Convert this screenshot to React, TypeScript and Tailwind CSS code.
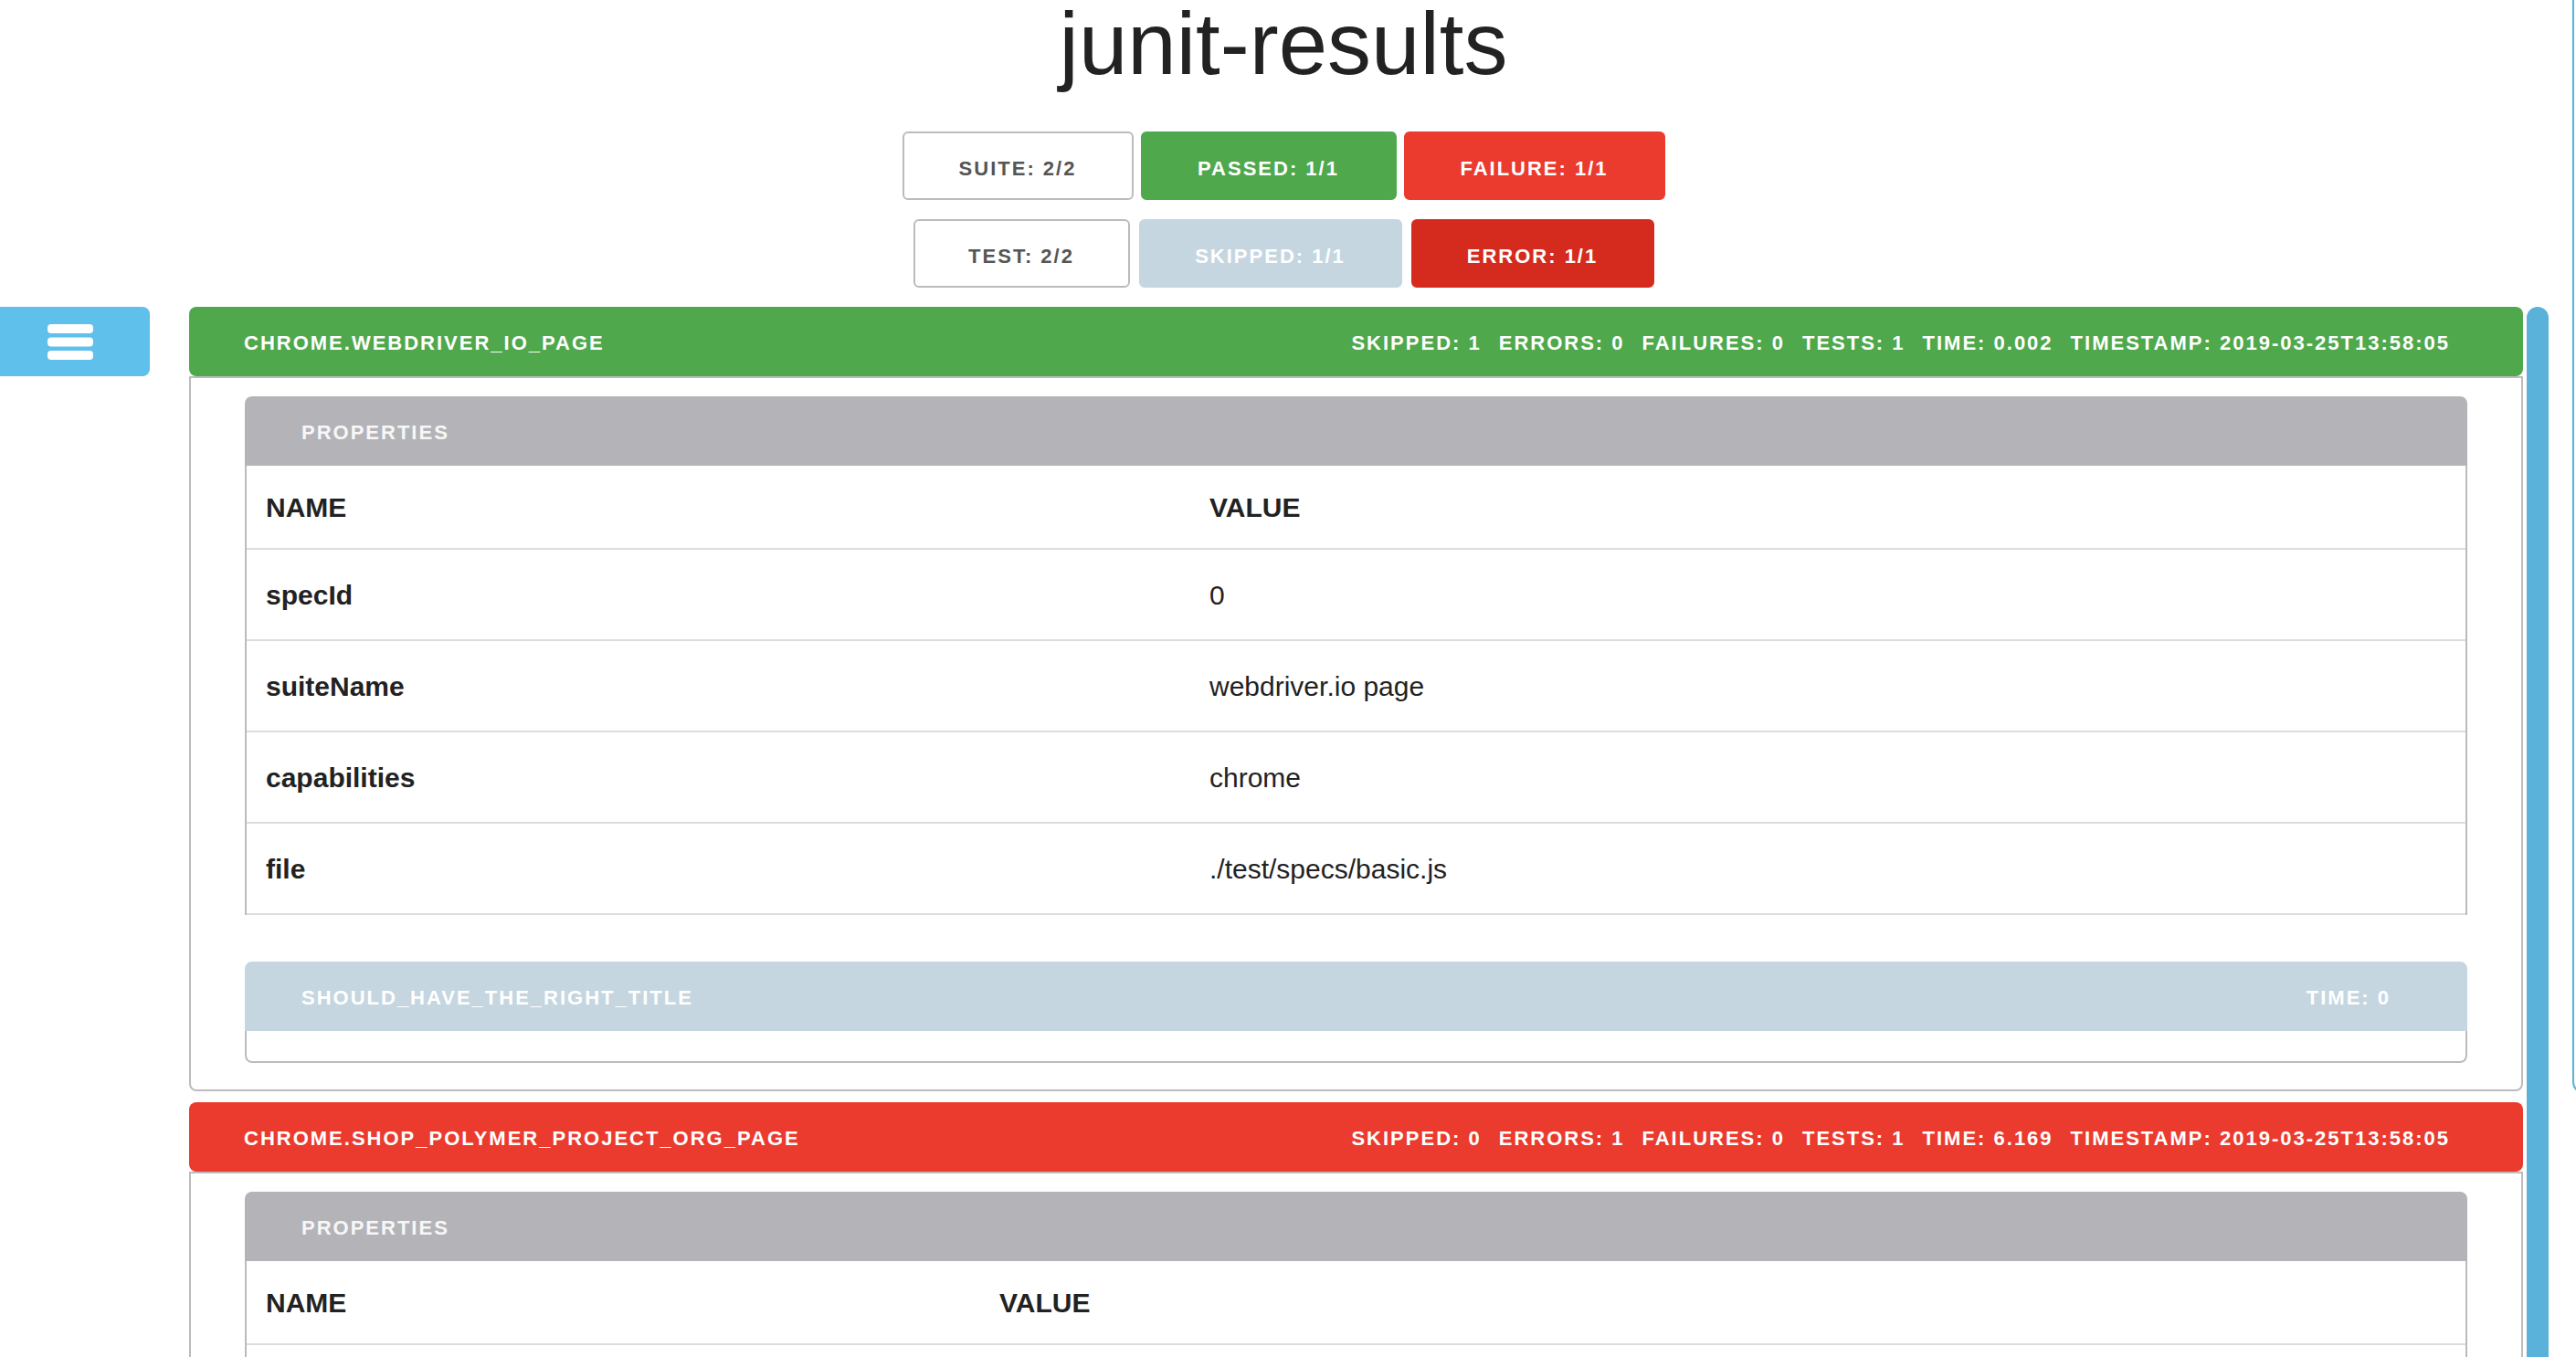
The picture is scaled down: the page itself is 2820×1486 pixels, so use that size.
import type { ReactNode } from "react"

type Prop = { name: string; value: string }
type TestCase = { name: string; time: string; status: "skipped" | "passed" | "error" }
type Suite = {
  name: string
  status: "passed" | "error"
  stats: string[]
  nameCol: string
  props: Prop[]
  tests: TestCase[]
}

const suites: Suite[] = [
  {
    name: "CHROME.WEBDRIVER_IO_PAGE",
    status: "passed",
    stats: ["SKIPPED: 1", "ERRORS: 0", "FAILURES: 0", "TESTS: 1", "TIME: 0.002", "TIMESTAMP: 2019-03-25T13:58:05"],
    nameCol: "w-[1034px]",
    props: [
      { name: "specId", value: "0" },
      { name: "suiteName", value: "webdriver.io page" },
      { name: "capabilities", value: "chrome" },
      { name: "file", value: "./test/specs/basic.js" },
    ],
    tests: [{ name: "SHOULD_HAVE_THE_RIGHT_TITLE", time: "0", status: "skipped" }],
  },
  {
    name: "CHROME.SHOP_POLYMER_PROJECT_ORG_PAGE",
    status: "error",
    stats: ["SKIPPED: 0", "ERRORS: 1", "FAILURES: 0", "TESTS: 1", "TIME: 6.169", "TIMESTAMP: 2019-03-25T13:58:05"],
    nameCol: "w-[804px]",
    props: [
      { name: "specId", value: "1" },
      { name: "suiteName", value: "shop.polymer-project.org page" },
      { name: "capabilities", value: "chrome" },
      { name: "file", value: "./test/specs/basic.js" },
    ],
    tests: [{ name: "SHOULD_HAVE_THE_RIGHT_TITLE", time: "6.169", status: "error" }],
  },
]

function SummaryButton({ label, className }: { label: string; className: string }) {
  return (
    <button
      className={`h-[75px] rounded-md border-2 pt-[5px] text-[22px] font-bold tracking-[2px] ${className}`}
    >
      {label}
    </button>
  )
}

function Bar({ color, title, right }: { color: string; title: string; right: ReactNode }) {
  return (
    <div className={`flex h-[76px] items-center justify-between pl-[60px] pr-[80px] pt-[3px] text-[22px] font-bold tracking-[2px] text-white ${color}`}>
      <span>{title}</span>
      <div className="flex gap-[19px]">{right}</div>
    </div>
  )
}

function Properties({ props, nameCol }: { props: Prop[]; nameCol: string }) {
  return (
    <div>
      <div className="flex h-[76px] items-center rounded-t-lg bg-[#b4b4b8] pl-[62px] pt-[2px] text-[22px] font-bold tracking-[2px] text-[#f7f7f7]">
        PROPERTIES
      </div>
      <div className="border-x-2 border-[#bbb] text-[30px] text-[#222]">
        <div className="flex h-[92px] items-center border-b-2 border-[#ddd] font-bold">
          <div className={`${nameCol} shrink-0 pl-[21px]`}>NAME</div>
          <div className="pl-[20px]">VALUE</div>
        </div>
        {props.map((p) => (
          <div key={p.name} className="flex h-[100px] items-center border-b-2 border-[#ddd]">
            <div className={`${nameCol} shrink-0 pl-[21px] font-bold`}>{p.name}</div>
            <div className="pl-[20px]">{p.value}</div>
          </div>
        ))}
      </div>
    </div>
  )
}

function SuitePanel({ suite }: { suite: Suite }) {
  const headColor = suite.status === "passed" ? "bg-[#4fa84c] rounded-lg" : "bg-[#eb3a2e] rounded-lg"
  return (
    <section>
      <Bar
        color={headColor}
        title={suite.name}
        right={suite.stats.map((s) => (
          <span key={s}>{s}</span>
        ))}
      />
      <div className="rounded-b-lg border-2 border-[#bbb] px-[59px] pb-[29px] pt-[20px]">
        <Properties props={suite.props} nameCol={suite.nameCol} />
        {suite.tests.map((t) => (
          <div key={t.name} className="mt-[51px]">
            <div
              className={`flex h-[76px] items-center justify-between rounded-t-lg pl-[62px] pr-[84px] pt-[2px] text-[22px] font-bold tracking-[2px] text-white ${
                t.status === "skipped" ? "bg-[#c5d6e0]" : t.status === "error" ? "bg-[#d52b1f]" : "bg-[#4fa84c]"
              }`}
            >
              <span>{t.name}</span>
              <span>TIME: {t.time}</span>
            </div>
            <div className="h-[35px] rounded-b-lg border-x-2 border-b-2 border-[#bbb]" />
          </div>
        ))}
      </div>
    </section>
  )
}

export default function App() {
  return (
    <div className="relative min-h-screen overflow-hidden bg-white font-['Liberation_Sans',Arial,sans-serif] text-[#222]">
      <header className="flex flex-col items-center pr-[10px]">
        <h1 className="text-[96px] font-normal leading-none text-[#222]">junit-results</h1>
        <div className="mt-[48px] flex gap-2">
          <SummaryButton label="SUITE: 2/2" className="w-[253px] border-[#bbb] bg-white text-[#555]" />
          <SummaryButton label="PASSED: 1/1" className="w-[280px] border-[#4fa84c] bg-[#4fa84c] text-white" />
          <SummaryButton label="FAILURE: 1/1" className="w-[286px] border-[#eb3a2e] bg-[#eb3a2e] text-white" />
        </div>
        <div className="mt-[21px] flex gap-[10px]">
          <SummaryButton label="TEST: 2/2" className="w-[237px] border-[#bbb] bg-white text-[#555]" />
          <SummaryButton label="SKIPPED: 1/1" className="w-[288px] border-[#c5d6e0] bg-[#c5d6e0] text-white" />
          <SummaryButton label="ERROR: 1/1" className="w-[266px] border-[#d52b1f] bg-[#d52b1f] text-white" />
        </div>
      </header>

      <div className="mt-[21px] flex items-stretch">
        <div className="w-[164px] shrink-0">
          <button className="flex h-[76px] w-[164px] items-center justify-center rounded-r-lg bg-[#5fc0eb] pr-[10px]" aria-label="Menu">
            <svg width="50" height="39" viewBox="0 0 50 39">
              <rect x="0" y="0" width="50" height="10" rx="4" fill="white" />
              <rect x="0" y="14.5" width="50" height="10" rx="4" fill="white" />
              <rect x="0" y="29" width="50" height="10" rx="4" fill="white" />
            </svg>
          </button>
        </div>

        <main className="ml-[43px] flex min-w-0 flex-1 flex-col gap-[12px] pb-[40px]">
          {suites.map((s) => (
            <SuitePanel key={s.name} suite={s} />
          ))}
        </main>

        <div className="ml-[4px] w-[24px] shrink-0 rounded-t-xl bg-[#5ab1da]" />
        <div className="w-[30px] shrink-0" />
      </div>

      <div className="absolute right-[-20px] top-0 h-[1197px] w-[24px] rounded-bl-xl border-b-2 border-l-2 border-[#5ab1da]" />
    </div>
  )
}
